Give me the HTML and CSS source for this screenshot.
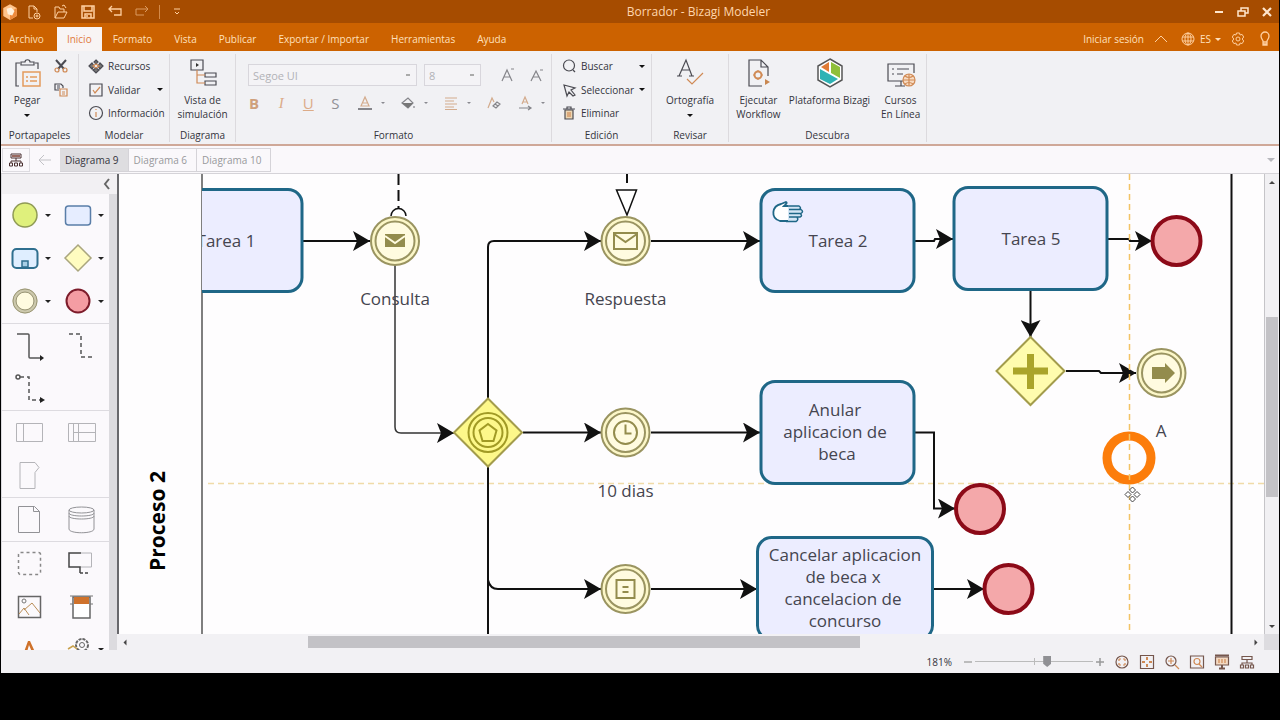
FILE: index.html
```html
<!DOCTYPE html>
<html lang="es">
<head>
<meta charset="utf-8">
<title>Borrador - Bizagi Modeler</title>
<link rel="stylesheet" href="styles.css">
</head>
<body>
<div class="app">
  <header class="titlebar">
    <div class="quick">
      <svg class="logo" viewBox="0 0 16 16"><path d="M8 1l6 3.500v7L8 15l-6-3.500v-7z" fill="#ffc38a"/><path d="M8 8l6-3.500v7L8 15z" fill="#ee8a3c"/><path d="M5 5l4-1 3 3-2 4-4-1z" fill="#fff0dc"/></svg>
      <button aria-label="Nuevo"><svg viewBox="0 0 16 16"><path d="M7 14H3V2h5l3 3v3M8 2v3h3"/><circle cx="11" cy="12" r="3"/><path d="M11 10.500v3M9.500 12h3"/></svg></button>
      <button aria-label="Abrir"><svg viewBox="0 0 16 16"><path d="M2 14V3h4l1 2h4v3M2 14l3-6h9l-3 6zM9 2l2-1 2 3"/></svg></button>
      <button aria-label="Guardar"><svg viewBox="0 0 16 16"><path d="M2 2h12v12H2zM4 2v5h8V2M5 14v-4h6v4M7 11v2" stroke-width="1.500"/></svg></button>
      <button aria-label="Deshacer"><svg viewBox="0 0 16 16"><path d="M5 2L2 5l3 3M2 5h12v6H7" stroke-width="1.300"/></svg></button>
      <button aria-label="Rehacer" class="dim"><svg viewBox="0 0 16 16"><path d="M11 2l3 3-3 3M14 5H2v6h8"/></svg></button>
      <span class="rule"></span>
      <button class="more" aria-label="Personalizar"><svg viewBox="0 0 16 16"><path d="M5 5h6M6 8l2 2 2-2"/></svg></button>
    </div>
    <h1>Borrador - Bizagi Modeler</h1>
    <div class="window-buttons">
      <button aria-label="Minimizar"><svg viewBox="0 0 16 16"><path d="M4 8h8" stroke-width="2"/></svg></button>
      <button aria-label="Restaurar"><svg viewBox="0 0 16 16"><path d="M3 7h7v5H3zM6 7V4h7v5h-3" stroke-width="1.500"/></svg></button>
      <button aria-label="Cerrar"><svg viewBox="0 0 16 16"><path d="M4 4l8 8M12 4l-8 8" stroke-width="2.200"/></svg></button>
    </div>
  </header>

  <nav class="menubar">
    <button class="file">Archivo</button>
    <button class="active">Inicio</button>
    <button>Formato</button>
    <button>Vista</button>
    <button>Publicar</button>
    <button>Exportar / Importar</button>
    <button>Herramientas</button>
    <button>Ayuda</button>
    <div class="account">
      <a href="#">Iniciar sesión</a>
      <button aria-label="Contraer cinta"><svg viewBox="0 0 16 16"><path d="M2 11l6-6 6 6"/></svg></button>
      <button class="lang"><svg viewBox="0 0 16 16"><circle cx="8" cy="8" r="6"/><ellipse cx="8" cy="8" rx="3" ry="6"/><path d="M2.500 6h11M2.500 10h11M8 2v12"/></svg>ES<i class="caret"></i></button>
      <button aria-label="Opciones"><svg viewBox="0 0 16 16"><path d="M6.500 2h3l.6 2 2-.6 1.600 2.600L12.200 8l1.500 2-1.600 2.600-2-.6-.6 2h-3l-.6-2-2 .6L2.300 10l1.500-2-1.500-2 1.600-2.600 2 .6z"/><circle cx="8" cy="8" r="2"/></svg></button>
      <button aria-label="Ideas"><svg viewBox="0 0 16 16"><path d="M6 10c0-1-2-2-2-5a4 4 0 0 1 8 0c0 3-2 4-2 5v4H6zM6 11h4M6 13h4" stroke-width="1.300"/></svg></button>
    </div>
  </nav>

  <section class="ribbon">
    <div class="group clipboard">
      <div class="body">
        <button class="big"><svg viewBox="0 0 32 32"><path d="M9 6H5v23h3M24 6h3v6" class="k"/><path d="M10 8V5h4c0-3 5-3 5 0h4v3z" class="k"/><path d="M12 15h17v14H12z" class="o2"/><path d="M15 20h2M19 20h7M15 24h2M19 24h7" class="o2"/></svg><span>Pegar</span><i class="caret"></i></button>
        <div class="stack">
          <button aria-label="Cortar"><svg viewBox="0 0 16 16"><path d="M3 2l8 9M13 2L5 11" class="k thick"/><circle cx="4" cy="12" r="2" class="o"/><circle cx="12" cy="12" r="2" class="o"/></svg></button>
          <button aria-label="Copiar"><svg viewBox="0 0 16 16"><path d="M6 8H2V2h6l2 2v2M4 4h3M4 6h3" class="k"/><path d="M7 7h7v7H7zM9 10h3M9 12h3" class="o"/></svg></button>
        </div>
      </div>
      <h2>Portapapeles</h2>
    </div>
    <div class="group model">
      <div class="body rows">
        <button><svg viewBox="0 0 16 16"><path d="M8 2l2 2-2 2-2-2zM4 5l2 3-2 3-3-3zM12 5l3 3-3 3-2-3zM8 10l3 2-3 3-3-3z" class="k" fill="#777"/><path d="M5 8l3-2 3 2-3 2z" class="o"/></svg>Recursos</button>
        <button><svg viewBox="0 0 16 16"><path d="M2 2h12v12H2z" class="k"/><path d="M5 8l2 3 5-6" class="o"/></svg>Validar<i class="caret"></i></button>
        <button><svg viewBox="0 0 16 16"><circle cx="8" cy="8" r="6.500" class="k"/><path d="M8 7v5M8 4v1" class="o"/></svg>Información</button>
      </div>
      <h2>Modelar</h2>
    </div>
    <div class="group diagram">
      <div class="body">
        <button class="big"><svg viewBox="0 0 32 32"><path d="M4 3h12v10H4zM18 16h11v4H18zM18 24h11v4H18z" class="k"/><path d="M10 13v13h8M10 18h8" class="o"/><path d="M9 6l3 2-3 2z" fill="#333"/></svg><span>Vista de<br>simulación</span></button>
      </div>
      <h2>Diagrama</h2>
    </div>
    <div class="group format">
      <div class="body">
        <div class="fonts">
          <select class="family" aria-label="Fuente" disabled><option>Segoe UI</option></select>
          <select class="size" aria-label="Tamaño" disabled><option>8</option></select>
          <button aria-label="Aumentar fuente"><svg viewBox="0 0 16 16"><path d="M3 14L8 3l5 11M5 10h6M12 2h3" class="g"/></svg></button>
          <button aria-label="Reducir fuente"><svg viewBox="0 0 16 16"><path d="M3 14L8 4l5 10M5 10h6M12 3h3" class="g"/></svg></button>
        </div>
        <div class="styles">
          <button class="b">B</button>
          <button class="i">I</button>
          <button class="u">U</button>
          <button class="s">S</button>
          <button class="drop" aria-label="Color de fuente"><svg viewBox="0 0 16 16"><path d="M4 11L8 2l4 9zM6 8h4" class="t"/><path d="M1 14h14" class="g thick"/></svg><i class="caret"></i></button>
          <button class="drop" aria-label="Color de relleno"><svg viewBox="0 0 16 16"><path d="M2 8l6-5 5 5-5 5z" class="g"/><path d="M2 8h11l-5 5z" fill="#777"/><path d="M14 11v2" class="g"/></svg><i class="caret"></i></button>
          <button class="drop" aria-label="Alinear"><svg viewBox="0 0 16 16"><path d="M2 3h12M2 6h9M2 9h12M2 12h9M2 14.500h12" class="t"/></svg><i class="caret"></i></button>
          <button aria-label="Borrar formato"><svg viewBox="0 0 16 16"><path d="M2 13L6 3l2 4" class="t"/><path d="M7 11l4-4 3 2-4 4zM9 9l3 2" class="g"/></svg></button>
          <button class="drop" aria-label="Dirección del texto"><svg viewBox="0 0 16 16"><path d="M5 9l3-7 3 7M6 7h4" class="t"/><path d="M2 13h11M11 11l3 2-3 2" class="g"/></svg><i class="caret"></i></button>
        </div>
      </div>
      <h2>Formato</h2>
    </div>
    <div class="group edit">
      <div class="body rows">
        <button><svg viewBox="0 0 16 16"><circle cx="8" cy="7.500" r="5.500" class="k"/><path d="M12 12l2 2" class="k"/></svg>Buscar<i class="caret"></i></button>
        <button><svg viewBox="0 0 16 16"><path d="M3 3l11 3-4 2 4 5-2 1-4-4-2 4z" class="k"/></svg>Seleccionar<i class="caret"></i></button>
        <button><svg viewBox="0 0 16 16"><path d="M4 5h8v9H4z" class="k" fill="#ecd6b4"/><path d="M2 4h12M6 4V2h4v2" class="k"/><path d="M7 7v5M9 7v5" class="o"/></svg>Eliminar</button>
      </div>
      <h2>Edición</h2>
    </div>
    <div class="group review">
      <div class="body">
        <button class="big"><svg viewBox="0 0 32 32"><path d="M5 19l7-16 6 16M8 13h8M3 19h5M15 19h5" class="k"/><path d="M13 22l5 5L29 16" class="o"/></svg><span>Ortografía</span><i class="caret"></i></button>
      </div>
      <h2>Revisar</h2>
    </div>
    <div class="group discover">
      <div class="body">
        <button class="big"><svg viewBox="0 0 32 32"><path d="M20 29H7V3h12l7 7v9M19 3v7h7" class="k"/><circle cx="16" cy="18" r="3.500" class="o thick"/><path d="M16 13v2M16 21v2M11 18h2M19 18h2" class="o"/><path d="M23 22l5 3-5 3z" fill="#c98750"/></svg><span>Ejecutar<br>Workflow</span></button>
        <button class="big wide"><svg viewBox="0 0 32 32"><path d="M16 2l12 7v14l-12 7-12-7V9z" fill="#fff" stroke="#555" stroke-width="1.500"/><path d="M15 5v10L7 10z" fill="#e07b35"/><path d="M17 5l9 5v11l-9-5z" fill="#8fbf3a"/><path d="M6 12l9 5 9 5-8 5-10-5z" fill="#2fb3b5"/></svg><span>Plataforma Bizagi</span></button>
        <button class="big"><svg viewBox="0 0 32 32"><path d="M20 24H3V7h26v9M10 29h10M16 24v5" class="k"/><path d="M7 12h2M12 12h12M7 17h2M12 17h6" class="k"/><circle cx="24" cy="23" r="6" fill="#f8dcc4" class="o"/><path d="M18 23h12M24 17v12M20 19q4 3 8 0M20 27q4-3 8 0" class="o"/></svg><span>Cursos<br>En Línea</span></button>
      </div>
      <h2>Descubra</h2>
    </div>
  </section>

  <nav class="doc-tabs">
    <button class="tree" aria-label="Diagramas"><svg viewBox="0 0 16 16"><path d="M3 2h10v4H3zM8 6v3M3 11V9h10v2M1.500 11h3v3h-3zM6.500 11h3v3h-3zM11.500 11h3v3h-3z" stroke="#4a3030"/><path d="M4 3h8v2H4z" fill="#9a6a60"/></svg></button>
    <button class="back" aria-label="Atrás"><svg viewBox="0 0 16 16"><path d="M14 8H3M7 3L2 8l5 5"/></svg></button>
    <button class="doc current">Diagrama 9</button>
    <button class="doc">Diagrama 6</button>
    <button class="doc">Diagrama 10</button>
    <i class="caret list"></i>
  </nav>

  <main class="workspace">
    <aside class="palette">
      <button class="collapse" aria-label="Contraer paleta"><svg viewBox="0 0 16 16"><path d="M10 3L6 8l4 5"/></svg></button>
      <div class="tools">
        <div class="toolset">
          <button aria-label="Evento de inicio"><svg viewBox="0 0 53 43"><circle cx="23" cy="21" r="12" fill="#dff07c" stroke="#8f9a55" stroke-width="1.500"/><path d="M43 20h6l-3 3z" class="tri"/></svg></button>
          <button aria-label="Tarea"><svg viewBox="0 0 53 43"><rect x="10.500" y="12" width="25" height="19" rx="3" fill="#e6edff" stroke="#5a7ea8" stroke-width="1.500"/><path d="M43 20h6l-3 3z" class="tri"/></svg></button>
          <button aria-label="Subproceso"><svg viewBox="0 0 53 43"><rect x="10.500" y="12" width="25" height="19" rx="4" fill="#dfeeff" stroke="#2f6f8f" stroke-width="2"/><rect x="20" y="24" width="6" height="6" fill="#a8cfe6" stroke="#2f6f8f" stroke-width="1.500"/><path d="M43 20h6l-3 3z" class="tri"/></svg></button>
          <button aria-label="Compuerta"><svg viewBox="0 0 53 43"><path d="M23 8l13 13-13 13L10 21z" fill="#fffcc0" stroke="#aaa67e" stroke-width="1.500"/><path d="M43 20h6l-3 3z" class="tri"/></svg></button>
          <button aria-label="Evento intermedio"><svg viewBox="0 0 53 43"><circle cx="23" cy="21" r="10.500" fill="#fffbe0" stroke="#cdc9ad" stroke-width="4"/><circle cx="23" cy="21" r="12" fill="none" stroke="#9b9777"/><circle cx="23" cy="21" r="9" fill="none" stroke="#9b9777"/><path d="M43 20h6l-3 3z" class="tri"/></svg></button>
          <button aria-label="Evento de fin"><svg viewBox="0 0 53 43"><circle cx="23" cy="21" r="11.500" fill="#f49da3" stroke="#7d1c2b" stroke-width="2"/><path d="M43 20h6l-3 3z" class="tri"/></svg></button>
        </div>
        <div class="toolset">
          <button aria-label="Flujo de secuencia"><svg viewBox="0 0 53 43"><path d="M15 10h11q1 0 1 1v22q0 1 1 1h11" class="l"/><path d="M38 31l4 3-4 3z" class="tri"/></svg></button>
          <button aria-label="Asociación"><svg viewBox="0 0 53 43"><path d="M14 10h12v23h14" class="l dash"/></svg></button>
          <button aria-label="Flujo de mensaje"><svg viewBox="0 0 53 43"><circle cx="16" cy="10" r="2" class="l"/><path d="M18 10h9v23h11" class="l dash"/><path d="M38 30l5 3-5 3z" class="tri"/></svg></button>
        </div>
        <div class="toolset">
          <button aria-label="Piscina"><svg viewBox="0 0 53 43"><path d="M14.500 12.500h26v18h-26zM21.500 12.500v18" class="p"/></svg></button>
          <button aria-label="Carril"><svg viewBox="0 0 53 43"><path d="M13.500 12.500h27v18h-27zM18.500 12.500v18M23.500 12.500v18M18.500 21.500h22" class="p"/></svg></button>
          <button aria-label="Fase"><svg viewBox="0 0 53 43"><path d="M18 8.500h15l4 5-4 5v16H18z" class="p"/></svg></button>
        </div>
        <div class="toolset">
          <button aria-label="Objeto de datos"><svg viewBox="0 0 53 43"><path d="M16.500 8.500h16l5 5v21h-21zM31.500 8.500v5h6" class="p dark"/></svg></button>
          <button aria-label="Almacén de datos"><svg viewBox="0 0 53 43"><path d="M14 12v19c0 5 25 5 25 0V12" class="p dark"/><ellipse cx="26.500" cy="12" rx="12.500" ry="3" class="p dark"/><path d="M14 15c0 4 25 4 25 0M14 18c0 4 25 4 25 0" class="p dark"/></svg></button>
        </div>
        <div class="toolset">
          <button aria-label="Grupo"><svg viewBox="0 0 53 43"><rect x="16.500" y="10.500" width="22" height="22" rx="2" fill="none" stroke="#888" stroke-width="1.500" stroke-dasharray="3 3"/></svg></button>
          <button aria-label="Anotación"><svg viewBox="0 0 53 43"><path d="M26 11h10.500v14H25" class="p"/><path d="M26 11H14v14h11v6" stroke="#444" stroke-width="1.500" fill="none"/><path d="M25 31h10" stroke="#444" stroke-width="1.500" stroke-dasharray="3 2"/></svg></button>
          <button aria-label="Imagen"><svg viewBox="0 0 53 43"><path d="M16.500 11.500h22v21h-22z" fill="none" stroke="#666" stroke-width="1.500"/><circle cx="22" cy="16" r="2" fill="none" stroke="#777"/><path d="M17 29l5-6 5 7M22 25l8-7 8 10" fill="none" stroke="#b98d57"/></svg></button>
          <button aria-label="Encabezado"><svg viewBox="0 0 53 43"><path d="M18 12h17v21H18z" fill="#fff" stroke="#666" stroke-width="1.500"/><path d="M19 12h15v7H19z" fill="#cf722b"/><path d="M15 11h23M15 19h3M35 19h3" stroke="#777"/></svg></button>
          <button aria-label="Texto"><svg viewBox="0 0 53 43"><path d="M22 24l4-11h2l5 11h-3l-3-7-2 7z" fill="#cf722b"/></svg></button>
          <button aria-label="Artefacto"><svg viewBox="0 0 53 43"><circle cx="27" cy="17" r="6" fill="none" stroke="#666" stroke-width="2" stroke-dasharray="3 1"/><circle cx="27" cy="17" r="2.500" fill="none" stroke="#666"/><path d="M13 21l5-3 4 3" fill="none" stroke="#c9a24e" stroke-width="1.500"/><path d="M43 20h6l-3 3z" class="tri"/></svg></button>
        </div>
      </div>
    </aside>

    <section class="stage">
      <div class="canvas">
        <svg class="drawing" width="1146" height="461" viewBox="119 174 1146 461">
          <defs>
            <marker id="arrow" viewBox="0 0 18 20" refX="17" refY="10" markerWidth="18" markerHeight="20" markerUnits="userSpaceOnUse" orient="auto"><path d="M0 0l17 10L0 20l4-10z" fill="#111"/></marker>
            <clipPath id="pool"><rect x="202" y="174" width="1029" height="461"/></clipPath>
          </defs>
          <path d="M208 483.500h1056" class="guide faint"/>
          <path d="M202 174v461" stroke="#555" stroke-width="1.500"/>
          <path d="M1231.500 174v461" stroke="#111" stroke-width="2"/>
          <text class="pool-name" transform="translate(165 521) rotate(-90)">Proceso 2</text>

          <g class="flow">
            <path d="M303 241h67"/>
            <path d="M395 265v162q0 6 6 6h53" class="thin"/>
            <path d="M488 400V247q0-6 6-6h107"/>
            <path d="M523 432.500h78"/>
            <path d="M488 465v170" class="open"/>
            <path d="M488 580q2 9 10 9h103"/>
            <path d="M651 241h109"/>
            <path d="M651 432.500h109"/>
            <path d="M651 589h106"/>
            <path d="M915 241h19l1-2h18"/>
            <path d="M1108 239h21l1 2h22"/>
            <path d="M1030.500 291v46"/>
            <path d="M1066 371h33l2 2h35"/>
            <path d="M915 432.500h19v76h21"/>
            <path d="M934 589h50"/>
          </g>
          <path d="M398.500 174v34" class="dashed"/>
          <path d="M391 216a7 7 0 1 1 15 0" fill="#fff" stroke="#111" stroke-width="1.500"/>
          <path d="M627 174v9" class="dashed"/>
          <path d="M616.500 190h20L627 215z" fill="#fff" stroke="#111" stroke-width="1.500"/>

          <g class="task">
            <rect x="148" y="189.500" width="154" height="102" rx="14" clip-path="url(#pool)"/>
            <rect x="761" y="189.500" width="153" height="102" rx="14"/>
            <rect x="954" y="187.500" width="153" height="102" rx="14"/>
            <rect x="761" y="381.500" width="153" height="102" rx="14"/>
            <rect x="757.500" y="537.500" width="175" height="102" rx="14"/>
          </g>
          <path d="M788 206h11q3 2 0 3.500h2q3 2 0 4h-1q3 2 0 3.500h-3q2 3-1 4.500h-10M789 209.500h12M789 213.500h12M789 217h10" fill="#d5e6f5" stroke="#1f6787" stroke-width="1.500"/>
          <path d="M788 221h-8c-10-3-8-15 1-17l5-2c2 1-1 3-2 4h4" fill="#fff" stroke="#1f6787" stroke-width="1.800"/>

          <g class="event">
            <circle cx="395" cy="241" r="24"/><circle cx="395" cy="241" r="19.500" class="inner"/>
            <circle cx="625.500" cy="241" r="24"/><circle cx="625.500" cy="241" r="19.500" class="inner"/>
            <circle cx="625.500" cy="432.500" r="24"/><circle cx="625.500" cy="432.500" r="19.500" class="inner"/>
            <circle cx="625.500" cy="589" r="24"/><circle cx="625.500" cy="589" r="19.500" class="inner"/>
            <circle cx="1161.500" cy="373" r="24"/><circle cx="1161.500" cy="373" r="19.500" class="inner"/>
          </g>
          <path d="M385 234h20v13h-20z" fill="#938c4d"/><path d="M385 236l10 7 10-7" fill="none" stroke="#fffbe0" stroke-width="2"/>
          <g class="glyph">
            <path d="M614 233h23v16h-23zM614 234l11.500 8 11.500-8"/>
            <circle cx="625.500" cy="432.500" r="11.500"/><path d="M625.500 424.500v9h6"/>
            <path d="M616.500 580h18v18h-18zM622.500 587h6M622.500 592h6"/>
          </g>
          <path d="M1152 367h13v-4l10 10-10 10v-4h-13z" fill="#938c4d"/>

          <g class="gateway">
            <path d="M488 398.500l34 34-34 34-34-34z"/>
            <path d="M1030.500 337l34 34-34 34-34-34z" class="pale"/>
          </g>
          <g fill="none" stroke="#a19a25" stroke-width="2"><circle cx="488" cy="432.500" r="19.500"/><circle cx="488" cy="432.500" r="14.500"/><path d="M488 424l8.500 6.500-3 10.500h-11l-3-10.500z"/></g>
          <path d="M1030.500 354v35M1013 371h35" stroke="#aaa42a" stroke-width="7"/>

          <g class="end">
            <circle cx="1176.500" cy="241" r="24"/>
            <circle cx="980" cy="509" r="24"/>
            <circle cx="1008.500" cy="589" r="24"/>
          </g>

          <g class="label">
            <text x="226" y="247" clip-path="url(#pool)">Tarea 1</text>
            <text x="395" y="305">Consulta</text>
            <text x="625.500" y="305">Respuesta</text>
            <text x="625.500" y="497">10 dias</text>
            <text x="838" y="247">Tarea 2</text>
            <text x="1031" y="245">Tarea 5</text>
            <text x="1161" y="437">A</text>
            <text><tspan x="835" y="416">Anular</tspan><tspan x="835" y="438">aplicacion de</tspan><tspan x="837" y="460">beca</tspan></text>
            <text><tspan x="845" y="561">Cancelar aplicacion</tspan><tspan x="843" y="583">de beca x</tspan><tspan x="843" y="605">cancelacion de</tspan><tspan x="845" y="627">concurso</tspan></text>
          </g>

          <circle cx="1129" cy="458" r="22" fill="none" stroke="#fc7d0b" stroke-width="9"/>
          <path d="M1129.500 174v461" class="guide"/>
          <g fill="#fff" stroke="#444"><path d="M1132.500 487l3 3-3 3-3-3zM1132.500 496l3 3-3 3-3-3zM1128 491.500l3 3-3 3-3-3zM1137 491.500l3 3-3 3-3-3z"/></g>
        </svg>
      </div>
      <div class="vscroll"><i class="caret up"></i><span class="thumb"></span><i class="caret"></i></div>
      <div class="hscroll"><i class="caret left"></i><span class="thumb"></span><i class="caret right"></i></div>
      <div class="corner"></div>
    </section>
  </main>

  <footer class="status">
    <label for="zoom">181%</label>
    <button aria-label="Alejar"><svg viewBox="0 0 16 16"><path d="M4 8h8" stroke="#aaa" stroke-width="1.500"/></svg></button>
    <input id="zoom" type="range" min="0" max="100" value="62">
    <button aria-label="Acercar"><svg viewBox="0 0 16 16"><path d="M4 8h8M8 4v8" stroke="#999" stroke-width="1.500"/></svg></button>
    <div class="views">
      <button aria-label="Restablecer"><svg viewBox="0 0 16 16"><circle cx="8" cy="8" r="6" class="k"/><path d="M5 5h2M9 5h2M5 11h2M9 11h2M5 5v2M11 5v2M5 9v2M11 9v2" class="o"/></svg></button>
      <button aria-label="Ajustar"><svg viewBox="0 0 16 16"><path d="M1.500 1.500h13v13h-13z" class="k"/><path d="M8 3v3M8 10v3M3 8h3M10 8h3" class="o thick"/></svg></button>
      <button aria-label="Ampliar"><svg viewBox="0 0 16 16"><circle cx="7" cy="7" r="5" class="k"/><path d="M7 4v6M4 7h6M11 11l4 4" class="o"/></svg></button>
      <button aria-label="Ampliar selección"><svg viewBox="0 0 16 16"><path d="M1.500 2h13v12h-13z" class="k"/><circle cx="8" cy="7.500" r="3" class="o"/><path d="M10 10l3 3" class="o"/></svg></button>
      <button aria-label="Presentación"><svg viewBox="0 0 16 16"><path d="M1.500 3h13v8h-13z" class="k" fill="#f3d9c2"/><path d="M8 11v4M5 14.500h6M1 1.500h14" class="k thick"/><path d="M5 5v4M8 5v4M11 5v4" class="o"/></svg></button>
      <button aria-label="Árbol"><svg viewBox="0 0 16 16"><path d="M3 2.500h10v3H3zM8 6v3M3 11V9h10v2M1.500 11h3v3h-3zM6.500 11h3v3h-3zM11.500 11h3v3h-3z" class="k"/></svg></button>
    </div>
  </footer>
</div>
</body>
</html>
```
FILE: styles.css
```css
* { box-sizing: border-box; }

body {
  margin: 0;
  height: 100vh;
  padding: 0 1px 47px;
  background: #000;
  font: 10px/14px "Open Sans", "Noto Sans", sans-serif;
  color: #34343c;
}

button {
  display: flex;
  align-items: center;
  justify-content: center;
  margin: 0;
  padding: 0;
  border: 0;
  background: none;
  font: inherit;
  color: inherit;
  white-space: nowrap;
}

svg { display: block; flex: none; fill: none; }
button svg { width: 16px; height: 16px; }

.app { display: flex; flex-direction: column; height: 100%; background: #f2f1f4; }

.caret {
  flex: none;
  width: 0;
  height: 0;
  border: 3px solid transparent;
  border-top-color: currentColor;
  border-bottom: 0;
}
.caret.up { transform: rotate(180deg); }
.caret.left { transform: rotate(90deg); }
.caret.right { transform: rotate(-90deg); }

.k { stroke: #4b4b52; stroke-width: 1.2; }
.o { stroke: #d08a55; stroke-width: 1.2; }
.o2 { stroke: #e39a5c; stroke-width: 1.5; }
.g { stroke: #85858a; stroke-width: 1.2; }
.t { stroke: #d3ab8c; stroke-width: 1.2; }
.thick { stroke-width: 2; }

/* Title bar */
.titlebar {
  display: flex;
  align-items: center;
  height: 23px;
  background: #a64c00;
  color: #ffd6ae;
}
.titlebar svg, .menubar svg { stroke: #ffd0a0; }
.quick, .window-buttons { display: flex; align-items: center; }
.quick button { width: 27px; }
.quick .logo { width: 18px; height: 18px; margin-right: 1px; stroke: none; }
.quick .dim { opacity: 0.6; }
.quick .rule { width: 1px; height: 14px; margin: 0 3px 0 4px; background: #d38a4a; }
.titlebar h1 {
  flex: 1;
  margin: 0;
  font-size: 12px;
  font-weight: 400;
  line-height: 16px;
  text-align: center;
}
.window-buttons button { width: 24px; height: 23px; }
.window-buttons svg { stroke: #ffe6cc; }

/* Menu bar */
.menubar {
  display: flex;
  align-items: flex-end;
  height: 28px;
  background: #cc6200;
  color: #ffe0bd;
}
.menubar > button { height: 24px; padding: 0 11px; }
.menubar > .file { padding: 0 13px 0 8px; }
.menubar > .active { padding: 0 10px; background: #f8f4f4; color: #e07a3c; }
.account { display: flex; align-items: center; gap: 9px; height: 24px; margin-left: auto; padding-right: 6px; }
.account a { color: inherit; text-decoration: none; }
.account .lang { gap: 4px; margin-left: 2px; }
.account button:last-child { margin-left: 2px; }

/* Ribbon */
.ribbon {
  display: flex;
  height: 95px;
  padding-top: 3px;
  background: #f1f1f4;
  border-bottom: 2px solid #cfa898;
}
.group { display: flex; flex-direction: column; border-right: 1px solid #dcdade; height: 88px; }
.group h2 { margin: 0; font: inherit; text-align: center; line-height: 14px; }
.group .body { display: flex; flex: 1; }
.clipboard { width: 78px; }
.model { width: 91px; }
.diagram { width: 66px; }
.format { width: 316px; }
.edit { width: 100px; }
.review { width: 77px; }
.discover { width: 198px; }
.discover .body { padding-left: 4px; }

.big { flex: 1 1 0; flex-direction: column; justify-content: flex-start; padding-top: 3px; }
.big svg { width: 32px; height: 32px; margin-bottom: 4px; }
.big .caret { margin-top: 7px; color: #111; }
.clipboard .big { flex: none; width: 52px; }
.big.wide { flex-grow: 1.8; }
.stack { display: flex; flex-direction: column; gap: 8px; padding-top: 4px; }

.body.rows { flex-direction: column; justify-content: space-between; padding: 2px 6px 5px 9px; }
.rows button { justify-content: flex-start; gap: 4px; height: 20px; }
.rows .caret { margin-left: auto; color: #111; }

.format .body { flex-direction: column; gap: 8px; padding: 10px 6px 0 12px; }
.fonts { display: flex; align-items: center; }
.fonts select {
  appearance: none;
  flex: none;
  height: 22px;
  padding: 0 4px;
  border: 1px solid #d8d6dc;
  border-radius: 0;
  background: linear-gradient(#aaa, #aaa) no-repeat right 6px center / 4px 2px, #f4f3f6;
  font-family: inherit;
  font-size: 11px;
  color: #b2b2b6;
  opacity: 1;
}
.fonts .family { width: 169px; margin-right: 7px; }
.fonts .size { width: 57px; margin-right: 18px; }
.fonts button { margin-right: 13px; }
.fonts button:last-child { margin-right: 0; }
.styles { display: flex; align-items: center; justify-content: space-between; font-size: 15px; line-height: 18px; color: #dcab88; }
.styles .b { font-weight: 700; color: #cfa07c; }
.styles .i { font-family: "Liberation Serif", serif; font-style: italic; }
.styles .u { text-decoration: underline; }
.styles .s { color: #909094; }
.styles .drop { gap: 8px; }
.styles .caret { border-width: 2px; border-bottom: 0; color: #8a8a90; }
.styles button:nth-child(-n+4) { width: 12px; }

/* Document tabs */
.doc-tabs {
  display: flex;
  align-items: stretch;
  height: 28px;
  padding: 2px 4px 1px 1px;
  background: #faf8fb;
  border-bottom: 1px solid #d5d3d8;
  color: #98989c;
}
.doc-tabs .tree { width: 28px; border: 1px solid #dddbe0; }
.doc-tabs .back { width: 30px; }
.doc-tabs .back svg { stroke: #c2c2c6; }
.doc { padding: 0 9px 0 5px; border: 1px solid #d5d3d8; border-left: 0; }
.doc.current { background: #dedde0; color: #34343c; }
.doc-tabs .list { align-self: center; margin-left: auto; border-width: 4px; border-bottom: 0; color: #b8b8be; }

/* Workspace */
.workspace { display: flex; flex: 1; min-height: 0; }

.palette { display: flex; flex-direction: column; width: 116px; padding-left: 1px; background: #dcdbdf; }
.collapse { justify-content: flex-end; height: 20px; padding-right: 2px; background: #f2f0f3; }
.collapse svg { stroke: #666; stroke-width: 2; }
.tools {
  flex: 1;
  min-height: 0;
  margin-right: 8px;
  overflow: hidden;
  background: #fbf9fc;
}
.toolset { display: grid; grid-template-columns: 53px 53px; border-bottom: 1px solid #dddbe0; }
.toolset button { height: 43px; }
.toolset svg { width: 53px; height: 43px; }
.tri { fill: #222; }
.l { stroke: #555; stroke-width: 1.5; }
.dash { stroke-dasharray: 4 3; }
.p { stroke: #b4b4b8; }
.p.dark { stroke: #929296; }

.stage {
  display: grid;
  grid-template: minmax(0, 1fr) 16px / minmax(0, 1fr) 15px;
  flex: 1;
  min-width: 0;
}
.canvas { overflow: hidden; background: #fefdfe; border-left: 2px solid #68686c; }
.vscroll {
  display: grid;
  grid-template-rows: 16px 1fr 16px;
  justify-items: center;
  align-items: center;
  background: #f1f0f3;
  border-left: 1px solid #c5c4c8;
  color: #444;
}
.vscroll .thumb { align-self: start; width: 12px; height: 42%; margin-top: 127px; background: #c3c2c6; }
.hscroll { display: grid; grid-template-columns: 16px 1fr 16px; align-items: center; justify-items: center; color: #444; }
.hscroll .thumb { justify-self: start; width: 49.5%; height: 12px; margin-left: 175px; background: #c3c2c6; }
.corner { background: #dddce0; }

.flow path { stroke: #111; stroke-width: 2; marker-end: url(#arrow); }
.flow .thin { stroke: #333; stroke-width: 1.5; }
.flow .open { marker-end: none; }
.dashed { stroke: #111; stroke-width: 2; stroke-dasharray: 11 5; }
.task rect { fill: #ecedff; stroke: #1f6787; stroke-width: 3; }
.event circle { fill: #fcf7c8; stroke: #9a9461; stroke-width: 2; }
.event .inner { fill: #fffbe0; }
.glyph { stroke: #938c4d; stroke-width: 2; }
.gateway path { fill: #fdf88a; stroke: #a39c4c; stroke-width: 2; }
.gateway .pale { fill: #fffcae; }
.end circle { fill: #f4a8aa; stroke: #8c0a18; stroke-width: 4; }
.label { fill: #45454f; font: 17px "Open Sans", "Noto Sans", sans-serif; text-anchor: middle; }
.pool-name { fill: #000; font: 700 21px "Open Sans", "Noto Sans", sans-serif; text-anchor: middle; }
.guide { stroke: #f3c465; stroke-width: 1.5; stroke-dasharray: 6 4; }
.guide.faint { stroke: #f0dba8; }

/* Status bar */
.status { display: flex; align-items: center; justify-content: flex-end; height: 23px; padding-right: 24px; }
.status label { margin-right: 8px; }
#zoom {
  appearance: none;
  width: 118px;
  height: 14px;
  margin: 0 -1px;
  background: linear-gradient(#bbb, #bbb) no-repeat 50% 50% / 1px 7px, linear-gradient(#bbb, #bbb) no-repeat 0 50% / 100% 1px;
}
#zoom::-webkit-slider-thumb {
  appearance: none;
  width: 8px;
  height: 11px;
  background: #909094;
  clip-path: polygon(0 0, 100% 0, 100% 70%, 50% 100%, 0 70%);
}
.views { display: flex; gap: 9px; margin-left: 6px; }
.views .k { stroke: #75564c; }
```
